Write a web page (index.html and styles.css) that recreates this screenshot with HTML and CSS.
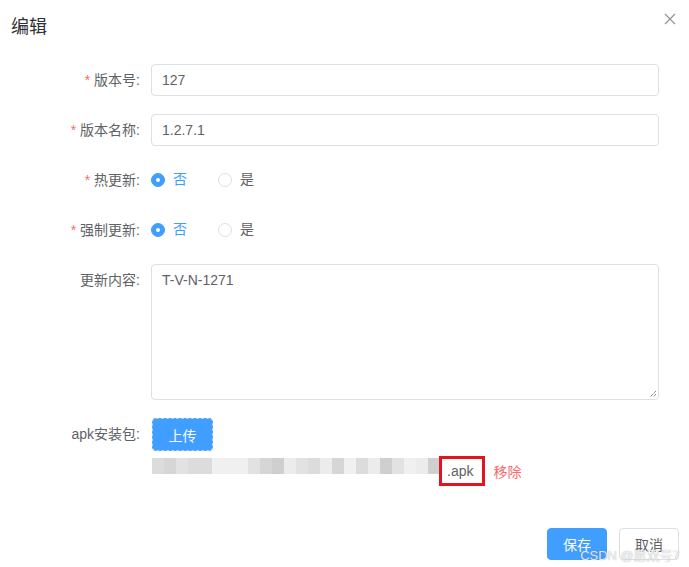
FILE: index.html
```html
<!DOCTYPE html>
<html lang="zh">
<head>
<meta charset="utf-8">
<link rel="stylesheet" href="styles.css">
</head>
<body>
<div class="dialog">
  <div class="header">
    <span class="title">编辑</span>
    <svg class="close" width="12" height="12" viewBox="0 0 12 12"><path d="M1 1L11 11M11 1L1 11" stroke="#909399" stroke-width="1.2" fill="none"/></svg>
  </div>
  <div class="form">
    <div class="item">
      <label class="label"><span class="req">*</span>版本号:</label>
      <div class="content"><div class="input">127</div></div>
    </div>
    <div class="item">
      <label class="label"><span class="req">*</span>版本名称:</label>
      <div class="content"><div class="input">1.2.7.1</div></div>
    </div>
    <div class="item">
      <label class="label"><span class="req">*</span>热更新:</label>
      <div class="content radios">
        <span class="radio checked"><span class="dot"></span><span class="rtext">否</span></span>
        <span class="radio"><span class="dot"></span><span class="rtext">是</span></span>
      </div>
    </div>
    <div class="item">
      <label class="label"><span class="req">*</span>强制更新:</label>
      <div class="content radios">
        <span class="radio checked"><span class="dot"></span><span class="rtext">否</span></span>
        <span class="radio"><span class="dot"></span><span class="rtext">是</span></span>
      </div>
    </div>
    <div class="item">
      <label class="label">更新内容:</label>
      <div class="content">
        <div class="textarea">T-V-N-1271
          <svg class="grip" width="8" height="8" viewBox="0 0 8 8"><path d="M7 1L1 7M7 4L4 7" stroke="#555" stroke-width="1" fill="none" stroke-dasharray="1 1"/></svg>
        </div>
      </div>
    </div>
    <div class="item last">
      <label class="label">apk安装包:</label>
      <div class="content">
        <button class="upload">上传</button>
        <div class="file">
          <span class="blur">
            <i class="s1"></i><i class="s2"></i><i class="s3"></i><i class="s1"></i><i class="s1"></i><i class="s5"></i><i class="s5"></i><i class="s5"></i><i class="s3"></i><i class="s2"></i><i class="s6"></i><i class="s4"></i><i class="s3"></i><i class="s1"></i><i class="s4"></i><i class="s2"></i><i class="s5"></i><i class="s1"></i><i class="s4"></i><i class="s6"></i><i class="s3"></i><i class="s5"></i><i class="s4"></i><i class="s6"></i>
          </span><span class="ext">.apk</span><span class="remove">移除</span>
        </div>
      </div>
    </div>
  </div>
  <div class="footer">
    <button class="btn primary">保存</button>
    <button class="btn">取消</button>
    <span class="watermark">CSDN @愿双号7</span>
  </div>
</div>
</body>
</html>
```

FILE: styles.css
```css
* { box-sizing: border-box; }
html, body { margin: 0; padding: 0; background: #fff; }
body {
  width: 689px;
  height: 567px;
  overflow: hidden;
  font-family: "Helvetica Neue", Helvetica, "Liberation Sans", "Noto Sans CJK SC", sans-serif;
  font-size: 14px;
  color: #606266;
}
.dialog { position: relative; width: 689px; height: 567px; }
.header {
  position: relative;
  padding: 15px 11px 0;
  height: 64px;
}
.title { font-size: 18px; line-height: 24px; color: #303133; }
.close { position: absolute; right: 13px; top: 13px; }
.form { padding-right: 30px; }
.item { display: flex; margin-bottom: 18px; }
.item.last { margin-bottom: 0; }
.label {
  width: 151px;
  flex: none;
  text-align: right;
  padding-right: 11px;
  line-height: 32px;
  color: #606266;
}
.req { color: #f56c6c; margin-right: 4px; }
.content { flex: 1; }
.input {
  height: 32px;
  border: 1px solid #dcdfe6;
  border-radius: 4px;
  padding: 0 10px;
  line-height: 30px;
  color: #606266;
}
.radios { display: flex; align-items: center; height: 32px; }
.radio { display: flex; align-items: center; margin-right: 31px; color: #606266; line-height: 16px; }
.dot {
  width: 14px; height: 14px;
  border-radius: 50%;
  border: 1px solid #dcdfe6;
  background: #fff;
  position: relative;
}
.radio.checked .dot { background: #409eff; border-color: #409eff; }
.radio.checked .dot::after {
  content: "";
  position: absolute;
  width: 4px; height: 4px;
  border-radius: 50%;
  background: #fff;
  left: 4px; top: 4px;
}
.rtext { margin-left: 8px; position: relative; top: -1px; }
.radio.checked .rtext { color: #409eff; }
.textarea {
  position: relative;
  height: 136px;
  border: 1px solid #dcdfe6;
  border-radius: 4px;
  padding: 5px 10px;
  line-height: 21px;
  color: #606266;
}
.grip { position: absolute; right: 1px; bottom: 1px; }
.upload {
  display: block;
  width: 61px; height: 33px;
  margin-left: 1px;
  background: #409eff;
  color: #fff;
  border: 1px dashed #a9cdf5;
  border-radius: 4px;
  font-family: inherit;
  font-size: 14px;
  padding: 0;
}
.file { display: flex; align-items: center; height: 30px; margin-top: 5px; margin-left: 1px; }
.blur { display: flex; flex-direction: row; height: 30px; align-items: flex-start; padding-top: 2px; }
.blur i { display: block; width: 12px; height: 16px; }
.s1 { background: #dcdcdc; }
.s2 { background: #d6d6d6; }
.s3 { background: #e2e2e2; }
.s4 { background: #ececec; }
.s5 { background: #f0f0f0; }
.s6 { background: #cfcfcf; }
.ext {
  display: inline-block;
  height: 30px;
  border: 3px solid #e3141e;
  padding: 0 9px 0 5px;
  line-height: 24px;
  margin-left: -1px;
  color: #606266;
}
.remove { color: #f56c6c; margin-left: 8px; }
.footer {
  position: absolute;
  left: 0; right: 0; top: 528px;
  display: flex;
  justify-content: flex-end;
  gap: 12px;
  padding-right: 10px;
}
.btn {
  width: 60px; height: 32px;
  border: 1px solid #dcdfe6;
  border-radius: 4px;
  background: #fff;
  color: #606266;
  font-family: inherit;
  font-size: 14px;
  padding: 0;
}
.btn.primary { background: #409eff; border-color: #409eff; color: #fff; }
.watermark {
  position: absolute;
  right: 9px; top: 17px;
  font-size: 13px;
  color: rgba(255,255,255,0.8);
  text-shadow: 0 0 1px rgba(120,120,120,0.7);
  letter-spacing: 0;
}
```
